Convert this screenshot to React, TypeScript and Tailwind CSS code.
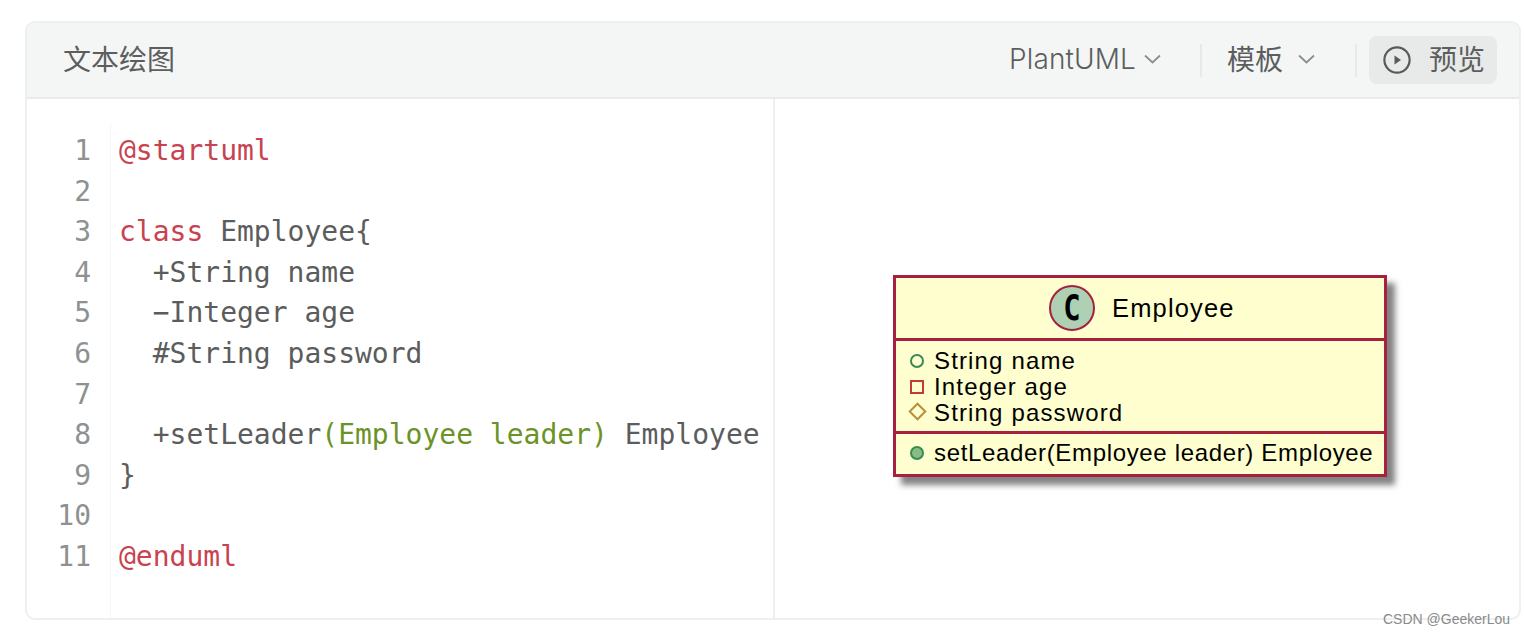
import React from "react";

const ui = { fontFamily: '"Inter","Noto Sans CJK SC",sans-serif' };
const cjk = { fontFamily: '"Noto Sans CJK SC",sans-serif' };
const mono = { fontFamily: '"DejaVu Sans Mono",monospace' };
const uml = { fontFamily: '"Liberation Sans",sans-serif' };

const Chevron = () => (
  <svg width="17" height="10" viewBox="0 0 17 10" fill="none" stroke="#8c8e8e" strokeWidth="1.8">
    <path d="M1 1.5 L8.5 8.5 L16 1.5" />
  </svg>
);

const R = ({ children }: { children: React.ReactNode }) => <span className="text-[#c8434f]">{children}</span>;
const G = ({ children }: { children: React.ReactNode }) => <span className="text-[#6b9328]">{children}</span>;

const lines: React.ReactNode[] = [
  <R>@startuml</R>,
  "",
  <><R>class</R> Employee{"{"}</>,
  "  +String name",
  "  −Integer age",
  "  #String password",
  "",
  <>{"  +setLeader"}<G>(Employee leader)</G> Employee</>,
  "}",
  "",
  <R>@enduml</R>,
];

const Member = ({ icon, children }: { icon: React.ReactNode; children: React.ReactNode }) => (
  <div className="flex h-[26px] items-center whitespace-nowrap">
    <div className="flex w-[38px] shrink-0 items-center justify-center pl-[4px]">{icon}</div>
    <span>{children}</span>
  </div>
);

export default function App() {
  return (
    <div className="relative h-[634px] w-[1524px] overflow-hidden bg-white pt-[21px] pl-[25px]" style={ui}>
      <div className="flex h-[599px] w-[1496px] flex-col overflow-hidden rounded-[10px] border-2 border-[#eeefef]">
        <div className="flex h-[76px] shrink-0 items-center border-b-2 border-[#e9eaea] bg-[#f4f6f6] pr-[22px] pl-[36px] text-[#5c5e5e]">
          <span className="mb-[4px] text-[28px] leading-none" style={cjk}>文本绘图</span>
          <div className="ml-auto flex items-center">
            <span className="mb-[2px] text-[28px] leading-none font-light tracking-[0.12px]">PlantUML</span>
            <span className="mb-[2px] ml-[8px]"><Chevron /></span>
            <div className="mr-[25px] ml-[39px] h-[33px] w-[2px] bg-[#e7e8e8]" />
            <span className="mb-[4px] text-[28px] leading-none" style={cjk}>模板</span>
            <span className="mb-[2px] ml-[15px]"><Chevron /></span>
            <div className="mr-[12px] ml-[40px] h-[33px] w-[2px] bg-[#e7e8e8]" />
            <div className="flex h-[48px] w-[128px] items-center rounded-[8px] bg-[#e8e9e9] pl-[14px]">
              <svg width="28" height="28" viewBox="0 0 28 28" fill="none">
                <circle cx="14" cy="14" r="12.6" stroke="#595b5b" strokeWidth="2.2" />
                <path d="M11.5 9.5 L18 14 L11.5 18.5 Z" fill="#595b5b" />
              </svg>
              <span className="mb-[4px] ml-[18px] text-[28px] leading-none" style={cjk}>预览</span>
            </div>
          </div>
        </div>
        <div className="flex min-h-0 flex-1">
          <div className="flex w-[748px] shrink-0 border-r-2 border-[#eeefef] pt-[32px]" style={mono}>
            <div className="-mt-[8px] w-[84px] shrink-0 border-r border-[#f5f6f6] pt-[8px] pr-[19px] text-right text-[28px] leading-[40.6px] text-[#8e9191]">
              {lines.map((_, i) => (
                <div key={i} className="h-[40.6px]">{i + 1}</div>
              ))}
            </div>
            <div className="pl-[8px] text-[28px] leading-[40.6px] whitespace-pre text-[#5b5d5d]">
              {lines.map((l, i) => (
                <div key={i} className="h-[40.6px]">{l}</div>
              ))}
            </div>
          </div>
          <div className="flex flex-1 pt-[176px] pl-[118px]">
            <div
              className="h-[202px] w-[494px] border-[3px] border-[#a6203f] bg-[#fefece] text-[24px] tracking-[1.15px] text-black shadow-[8px_8px_6px_rgba(90,90,90,0.75)]"
              style={uml}
            >
              <div className="flex h-[63px] items-center border-b-[3px] border-[#a6203f] pl-[153px]">
                <div className="flex h-[46px] w-[46px] shrink-0 items-center justify-center rounded-full border-2 border-[#a6203f] bg-[#add1b2] text-[36px] font-bold tracking-normal" style={mono}>
                  <span className="inline-block scale-x-[0.8]">C</span>
                </div>
                <span className="ml-[17px] text-[25.5px]">Employee</span>
              </div>
              <div className="flex h-[93px] flex-col justify-center border-b-[3px] border-[#a6203f] pt-[2px]">
                <Member icon={<div className="h-[14px] w-[14px] rounded-full border-2 border-[#3a8a55]" />}>String name</Member>
                <Member icon={<div className="h-[14px] w-[14px] border-2 border-[#c23a3a]" />}>Integer age</Member>
                <Member icon={<div className="h-[13px] w-[13px] -translate-y-[2px] rotate-45 border-2 border-[#b88f3c]" />}>String password</Member>
              </div>
              <div className="flex h-[37px] items-center tracking-[0.66px]">
                <Member icon={<div className="h-[14px] w-[14px] rounded-full border-2 border-[#3a8a55] bg-[#84be84]" />}>setLeader(Employee leader) Employee</Member>
              </div>
            </div>
          </div>
        </div>
      </div>
      <span className="absolute top-[610px] left-[1383px] text-[14px] leading-[18px] text-[#8a8a8a]" style={uml}>CSDN @GeekerLou</span>
    </div>
  );
}
